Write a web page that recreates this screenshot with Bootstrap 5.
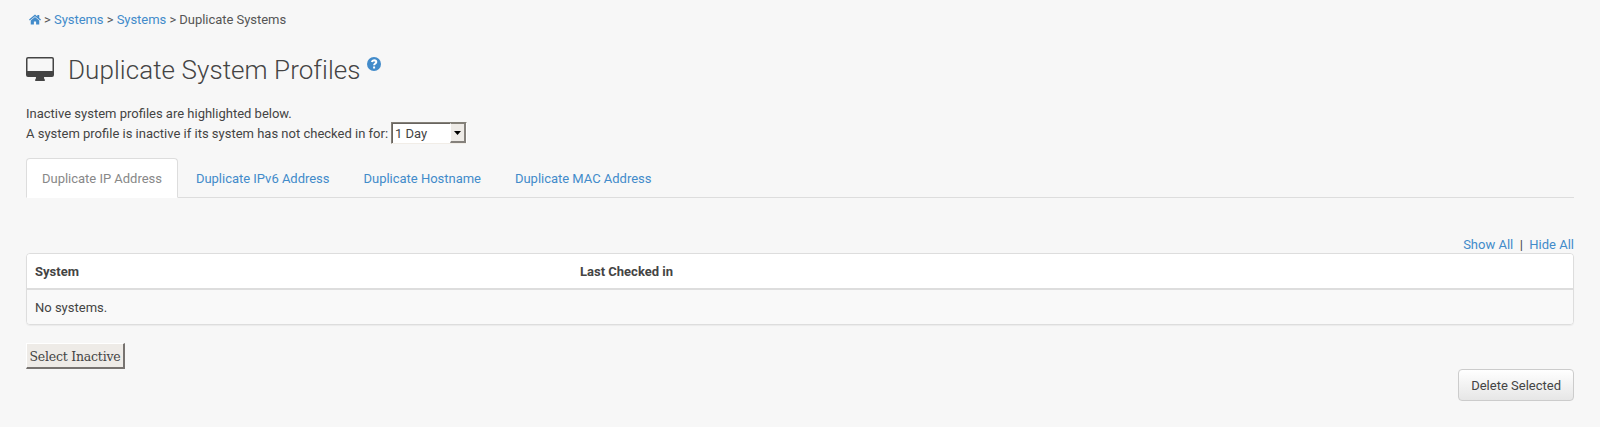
<!DOCTYPE html>
<html lang="en">
<head>
<meta charset="utf-8">
<title>Duplicate System Profiles</title>
<link href="https://cdn.jsdelivr.net/npm/bootstrap@5.3.0/dist/css/bootstrap.min.css" rel="stylesheet">
<style>
body{background:#f7f7f7;color:#444;font-family:Roboto,"Liberation Sans",sans-serif;font-size:13px;line-height:19px}
a{color:#428bca;text-decoration:none}
.page{padding:9px 26px 0}
.crumbs{color:#555;padding-left:3px;height:20px;white-space:pre;letter-spacing:-.04px}
.crumbs svg{width:12px;height:11px;margin-right:3px;fill:#428bca}
.page-title{margin-top:23px;height:36px;font-size:26px;font-weight:300;line-height:36px;color:#444;letter-spacing:.06px}
.page-title .screen{width:28px;height:24px;margin:5px 14px 0 0;fill:#444}
.page-title .help{width:14px;height:14px;margin:5px 0 0 6px}
.intro{margin-top:16px}
.period-row{margin-top:-1px}
.period{width:76px;height:22px;margin-left:3px;border:1px solid;border-color:#848078 #fff #f1ede7 #848078;background:#fff}
.period-text{flex:1;border:solid #68645f;border-width:1px 0 0 1px;padding-left:2px;line-height:19px}
.period-arrow{width:16px;height:20px;background:#eeebe7;border:solid;border-width:1px 2px 2px 1px;border-color:#848078 #85817c #85817c #fff}
.tabs{margin-top:14px;--bs-nav-tabs-border-color:#ddd;letter-spacing:-.018px}
.tabs .nav-link{padding:11px 15px 9px;line-height:18px;margin-right:2px;color:#428bca;border-radius:4px 4px 0 0}
.tabs .nav-link.active{color:#888;background:#fff;border-color:#ddd #ddd #fff}
.toggles{margin-top:37px;height:18px}
.systems{border:1px solid #ddd;border-radius:4px;overflow:hidden;box-shadow:0 1px 1px rgba(0,0,0,.05)}
.systems .table{color:#444;line-height:18px;table-layout:fixed;border-color:#ddd}
.systems th,.systems td{border:0;color:#444}
.systems th{padding:9px 8px 7px;background:#fff;border-bottom:2px solid #ddd}
.systems td{padding:9px 8px 7px;background:#f9f9f9}
.name-col{width:545px}
.classic{width:99px;height:26px;margin-top:18px;padding:2px 0 0;font-family:"Roboto Slab","DejaVu Serif",serif;font-size:12.5px;letter-spacing:-.22px;line-height:22px;color:#444;background:#eeebe7;border:solid;border-width:1px 2px 2px 1px;border-color:#fff #777370 #777370 #fff;white-space:nowrap}
.delete{height:32px;padding:6px 12px 4px;font-size:13px;line-height:20px;color:#444;border:1px solid #ccc;border-radius:4px;background:linear-gradient(#fff,#e6e6e6)}
</style>
</head>
<body>
<main class="page">
<nav class="crumbs d-flex align-items-center"><a href="#" class="d-flex"><svg viewBox="0 0 24 20"><path d="M12 5 3.500 12v8h6.300v-6h4.400v6h6.300v-8zM12 0 0 10l1.600 1.900L12 3.300l10.400 8.600L24 10l-3.500-3V1h-3.800v2.900z"/></svg></a><span>&gt; <a href="#">Systems</a> &gt; <a href="#">Systems</a> &gt; Duplicate Systems</span></nav>
<h1 class="page-title d-flex mb-0"><svg class="screen" viewBox="0 0 28 24"><path fill-rule="evenodd" d="M2 0h24a2 2 0 0 1 2 2v16a2 2 0 0 1-2 2h-8q0 2 .8 2.600V24H9.200v-1.400Q10 22 10 20H2a2 2 0 0 1-2-2V2a2 2 0 0 1 2-2zm0 1.500a.5.5 0 0 0-.5.5v12h25V2a.5.5 0 0 0-.5-.5z"/></svg><span>Duplicate System Profiles</span><a href="#" class="d-flex" aria-label="Help"><svg class="help" viewBox="0 0 14 14"><circle cx="7" cy="7" r="7" fill="#428bca"/><path d="M4.800 5Q5.300 3.200 7.100 3.200 9.300 3.300 9.300 5c0 1.600-2.200 1.500-2.200 3.300M7.100 9.400v2" fill="none" stroke="#fff" stroke-width="2"/></svg></a></h1>
<div class="intro">
<div>Inactive system profiles are highlighted below.</div>
<div class="period-row d-flex align-items-center"><span>A system profile is inactive if its system has not checked in for:</span>
<div class="period d-flex" role="combobox" aria-label="Inactive period"><span class="period-text">1 Day</span><span class="period-arrow d-flex align-items-center justify-content-center"><svg width="7" height="4"><path d="M0 0h7L3.500 4z"/></svg></span></div></div>
</div>
<ul class="nav nav-tabs tabs">
<li class="nav-item"><a class="nav-link active" href="#">Duplicate IP Address</a></li>
<li class="nav-item"><a class="nav-link" href="#">Duplicate IPv6 Address</a></li>
<li class="nav-item"><a class="nav-link" href="#">Duplicate Hostname</a></li>
<li class="nav-item"><a class="nav-link" href="#">Duplicate MAC Address</a></li>
</ul>
<div class="toggles text-end"><a href="#">Show All</a>&nbsp; |&nbsp; <a href="#">Hide All</a></div>
<div class="systems"><table class="table mb-0"><thead><tr><th class="name-col">System</th><th>Last Checked in</th></tr></thead><tbody><tr><td colspan="2">No systems.</td></tr></tbody></table></div>
<button class="classic d-block">Select Inactive</button>
<div class="text-end"><button class="btn delete">Delete Selected</button></div>
</main>
<script src="https://cdn.jsdelivr.net/npm/bootstrap@5.3.0/dist/js/bootstrap.bundle.min.js"></script>
</body>
</html>
